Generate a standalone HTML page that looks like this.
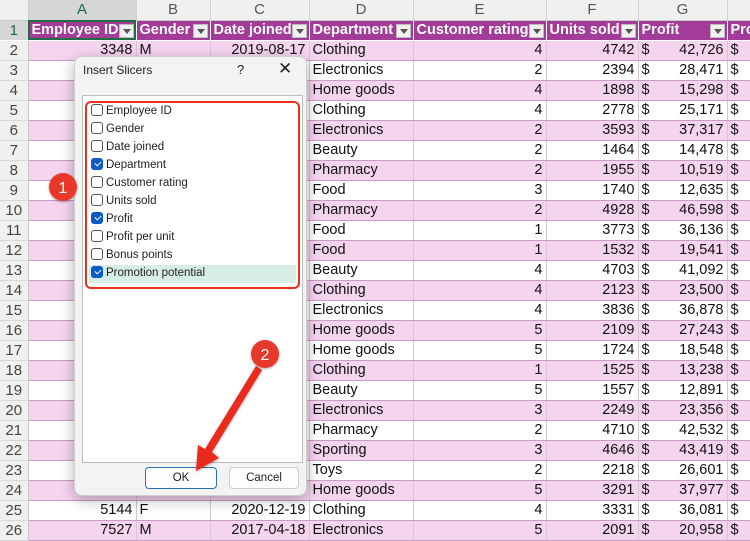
<!DOCTYPE html>
<html><head><meta charset="utf-8"><style>
*{margin:0;padding:0;box-sizing:border-box}
body{width:750px;height:534px;overflow:hidden;background:#fff;font-family:"Liberation Sans",Arial,sans-serif;font-size:14.5px;position:relative}
table{border-collapse:collapse;table-layout:fixed;position:absolute;left:0;top:0;width:767px}
td{height:20px;padding:0 3px;white-space:nowrap;overflow:hidden;border-right:1px solid #d8c4d6;border-bottom:1px solid #c99bc4;color:#111;line-height:19px}
td.rh{background:#f0f0f0;color:#444;text-align:center;border-right:1px solid #c8c8c8;border-bottom:1px solid #d8d8d8;padding:0;font-size:15px}
tr.ch td{background:#f0f0f0;color:#555;text-align:center;border-bottom:1px solid #c8c8c8;border-right:1px solid #d0d0d0;font-size:15px}
tr.hd td{background:#a33b98;color:#fff;font-weight:bold;border-right:1px solid #fff;border-bottom:1px solid #fff;position:relative}
tr.hd td.rh{background:#d6d6d6;color:#1e6b3e;font-weight:normal;border-right:1px solid #c8c8c8}
tr.p td{background:#f5d4f0}
tr.p td.rh,tr.w td.rh{background:#f0f0f0}
.r{text-align:right}
.dd{position:absolute;right:2px;top:3px;width:15px;height:14px;background:#f0f0f0;border:1px solid #bbb}
.dd:after{content:"";position:absolute;left:3px;top:4px;border-left:4px solid transparent;border-right:4px solid transparent;border-top:5px solid #555}
.dlg{position:absolute;left:74px;top:56px;width:233px;height:440px;background:#f3f3f3;border:1px solid #cfcfcf;border-radius:8px;box-shadow:0 4px 14px rgba(0,0,0,.3)}
.lb{position:absolute;left:7px;top:38px;width:221px;height:368px;background:#fff;border:1px solid #bdbdbd}
.it{position:absolute;left:8px;height:18px;font-size:11.5px;color:#222;line-height:18px;padding-left:15px;width:207px}
.cb{position:absolute;left:0;top:2px;width:12px;height:12px;border:1px solid #555;border-radius:3px;background:#fff}
.cb.on{background:#0a5cc4;border-color:#0a5cc4}
.cb.on:after{content:"";position:absolute;left:3px;top:2px;width:5px;height:3px;border-left:1.3px solid #fff;border-bottom:1.3px solid #fff;transform:rotate(-45deg)}
.btn{position:absolute;top:410px;height:22px;background:#fdfdfd;border:1px solid #ccc;border-radius:4px;text-align:center;font-size:11.5px;line-height:20px;color:#222}
</style></head><body>
<table>
<colgroup><col style="width:28px"><col style="width:108px"><col style="width:74px"><col style="width:99px"><col style="width:104px"><col style="width:133px"><col style="width:92px"><col style="width:89px"><col style="width:40px"></colgroup>
<tr class="ch"><td class="rh" style="background:#f0f0f0"></td><td style="background:#d6d6d6;color:#1e6b3e">A</td><td>B</td><td>C</td><td>D</td><td>E</td><td>F</td><td>G</td><td></td></tr>
<tr class="hd"><td class="rh">1</td><td style="outline:2px solid #1e6b44;outline-offset:-2px">Employee ID<span class="dd"></span></td><td>Gender<span class="dd"></span></td><td>Date joined<span class="dd"></span></td><td>Department<span class="dd"></span></td><td>Customer rating<span class="dd"></span></td><td>Units sold<span class="dd"></span></td><td>Profit<span class="dd"></span></td><td>Pro</td></tr>
<tr class="p"><td class="rh">2</td><td class="r">3348</td><td>M</td><td class="r">2019-08-17</td><td>Clothing</td><td class="r">4</td><td class="r">4742</td><td>$<span style="float:right">42,726</span></td><td>$</td></tr>
<tr class="w"><td class="rh">3</td><td></td><td></td><td></td><td>Electronics</td><td class="r">2</td><td class="r">2394</td><td>$<span style="float:right">28,471</span></td><td>$</td></tr>
<tr class="p"><td class="rh">4</td><td></td><td></td><td></td><td>Home goods</td><td class="r">4</td><td class="r">1898</td><td>$<span style="float:right">15,298</span></td><td>$</td></tr>
<tr class="w"><td class="rh">5</td><td></td><td></td><td></td><td>Clothing</td><td class="r">4</td><td class="r">2778</td><td>$<span style="float:right">25,171</span></td><td>$</td></tr>
<tr class="p"><td class="rh">6</td><td></td><td></td><td></td><td>Electronics</td><td class="r">2</td><td class="r">3593</td><td>$<span style="float:right">37,317</span></td><td>$</td></tr>
<tr class="w"><td class="rh">7</td><td></td><td></td><td></td><td>Beauty</td><td class="r">2</td><td class="r">1464</td><td>$<span style="float:right">14,478</span></td><td>$</td></tr>
<tr class="p"><td class="rh">8</td><td></td><td></td><td></td><td>Pharmacy</td><td class="r">2</td><td class="r">1955</td><td>$<span style="float:right">10,519</span></td><td>$</td></tr>
<tr class="w"><td class="rh">9</td><td></td><td></td><td></td><td>Food</td><td class="r">3</td><td class="r">1740</td><td>$<span style="float:right">12,635</span></td><td>$</td></tr>
<tr class="p"><td class="rh">10</td><td></td><td></td><td></td><td>Pharmacy</td><td class="r">2</td><td class="r">4928</td><td>$<span style="float:right">46,598</span></td><td>$</td></tr>
<tr class="w"><td class="rh">11</td><td></td><td></td><td></td><td>Food</td><td class="r">1</td><td class="r">3773</td><td>$<span style="float:right">36,136</span></td><td>$</td></tr>
<tr class="p"><td class="rh">12</td><td></td><td></td><td></td><td>Food</td><td class="r">1</td><td class="r">1532</td><td>$<span style="float:right">19,541</span></td><td>$</td></tr>
<tr class="w"><td class="rh">13</td><td></td><td></td><td></td><td>Beauty</td><td class="r">4</td><td class="r">4703</td><td>$<span style="float:right">41,092</span></td><td>$</td></tr>
<tr class="p"><td class="rh">14</td><td></td><td></td><td></td><td>Clothing</td><td class="r">4</td><td class="r">2123</td><td>$<span style="float:right">23,500</span></td><td>$</td></tr>
<tr class="w"><td class="rh">15</td><td></td><td></td><td></td><td>Electronics</td><td class="r">4</td><td class="r">3836</td><td>$<span style="float:right">36,878</span></td><td>$</td></tr>
<tr class="p"><td class="rh">16</td><td></td><td></td><td></td><td>Home goods</td><td class="r">5</td><td class="r">2109</td><td>$<span style="float:right">27,243</span></td><td>$</td></tr>
<tr class="w"><td class="rh">17</td><td></td><td></td><td></td><td>Home goods</td><td class="r">5</td><td class="r">1724</td><td>$<span style="float:right">18,548</span></td><td>$</td></tr>
<tr class="p"><td class="rh">18</td><td></td><td></td><td></td><td>Clothing</td><td class="r">1</td><td class="r">1525</td><td>$<span style="float:right">13,238</span></td><td>$</td></tr>
<tr class="w"><td class="rh">19</td><td></td><td></td><td></td><td>Beauty</td><td class="r">5</td><td class="r">1557</td><td>$<span style="float:right">12,891</span></td><td>$</td></tr>
<tr class="p"><td class="rh">20</td><td></td><td></td><td></td><td>Electronics</td><td class="r">3</td><td class="r">2249</td><td>$<span style="float:right">23,356</span></td><td>$</td></tr>
<tr class="w"><td class="rh">21</td><td></td><td></td><td></td><td>Pharmacy</td><td class="r">2</td><td class="r">4710</td><td>$<span style="float:right">42,532</span></td><td>$</td></tr>
<tr class="p"><td class="rh">22</td><td></td><td></td><td></td><td>Sporting</td><td class="r">3</td><td class="r">4646</td><td>$<span style="float:right">43,419</span></td><td>$</td></tr>
<tr class="w"><td class="rh">23</td><td></td><td></td><td></td><td>Toys</td><td class="r">2</td><td class="r">2218</td><td>$<span style="float:right">26,601</span></td><td>$</td></tr>
<tr class="p"><td class="rh">24</td><td></td><td></td><td></td><td>Home goods</td><td class="r">5</td><td class="r">3291</td><td>$<span style="float:right">37,977</span></td><td>$</td></tr>
<tr class="w"><td class="rh">25</td><td class="r">5144</td><td>F</td><td class="r">2020-12-19</td><td>Clothing</td><td class="r">4</td><td class="r">3331</td><td>$<span style="float:right">36,081</span></td><td>$</td></tr>
<tr class="p"><td class="rh">26</td><td class="r">7527</td><td>M</td><td class="r">2017-04-18</td><td>Electronics</td><td class="r">5</td><td class="r">2091</td><td>$<span style="float:right">20,958</span></td><td>$</td></tr>
</table>

<div class="dlg">
<div style="position:absolute;left:8px;top:6px;font-size:12px;color:#222">Insert Slicers</div>
<div style="position:absolute;left:162px;top:5px;font-size:13px;color:#222">?</div>
<div style="position:absolute;left:203px;top:2px;font-size:17px;color:#222">✕</div>
<div class="lb">
<div style="position:absolute;left:2px;top:5px;width:215px;height:188px;border:2px solid #e8301f;border-radius:6px"></div>
<div style="position:absolute;left:6px;top:169px;width:207px;height:18px;background:#d7eee4"></div>
<div class="it" style="top:6px"><span class="cb"></span>Employee ID</div>
<div class="it" style="top:24px"><span class="cb"></span>Gender</div>
<div class="it" style="top:42px"><span class="cb"></span>Date joined</div>
<div class="it" style="top:60px"><span class="cb on"></span>Department</div>
<div class="it" style="top:78px"><span class="cb"></span>Customer rating</div>
<div class="it" style="top:96px"><span class="cb"></span>Units sold</div>
<div class="it" style="top:114px"><span class="cb on"></span>Profit</div>
<div class="it" style="top:132px"><span class="cb"></span>Profit per unit</div>
<div class="it" style="top:150px"><span class="cb"></span>Bonus points</div>
<div class="it" style="top:168px"><span class="cb on"></span>Promotion potential</div>
</div>
<div class="btn" style="left:70px;width:72px;border:1px solid #2a6fb8">OK</div>
<div class="btn" style="left:154px;width:70px">Cancel</div>
</div>

<svg width="750" height="534" style="position:absolute;left:0;top:0">
<defs><filter id="s"><feDropShadow dx="0" dy="1" stdDeviation="1.2" flood-opacity=".35"/></filter></defs>
<circle cx="63" cy="187" r="14" fill="#e8392c" filter="url(#s)"/>
<text x="63" y="193" fill="#fff" font-size="16" text-anchor="middle" font-family="Liberation Sans">1</text>
<polygon points="256,366 262,370 212,452 219,458 196,471 198,445 205,449" fill="#ea2b1f" filter="url(#s)"/>
<circle cx="265" cy="354" r="14" fill="#e8392c" filter="url(#s)"/>
<text x="265" y="360" fill="#fff" font-size="16" text-anchor="middle" font-family="Liberation Sans">2</text>
</svg>
</body></html>
